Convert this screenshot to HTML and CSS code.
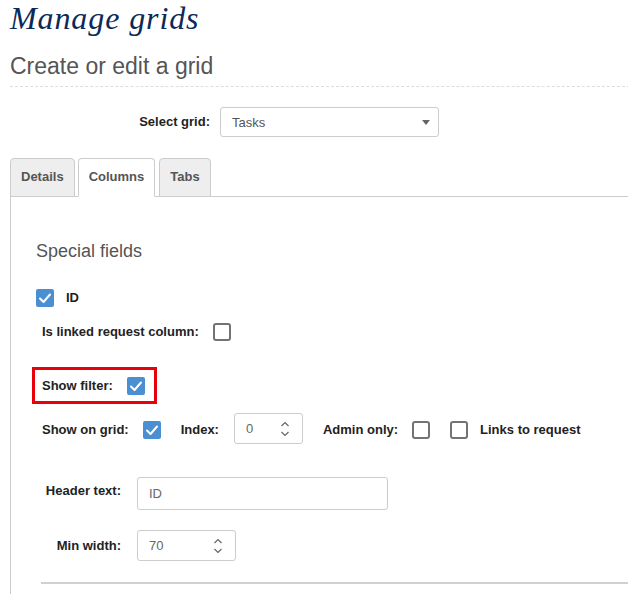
FILE: index.html
```html
<!DOCTYPE html>
<html>
<head>
<meta charset="utf-8">
<title>Manage grids</title>
<link rel="stylesheet" href="styles.css">
</head>
<body>
<div class="page">
  <h1 class="title">Manage grids</h1>
  <h2 class="subtitle">Create or edit a grid</h2>

  <div class="select-row">
    <span class="select-label">Select grid:</span>
    <div class="select"><span class="select-value">Tasks</span><span class="caret"></span></div>
  </div>

  <div class="tabs">
    <div class="tab">Details</div>
    <div class="tab active">Columns</div>
    <div class="tab">Tabs</div>
  </div>

  <div class="panel">
    <h3 class="section-title">Special fields</h3>

    <div class="row">
      <span class="cb checked"><svg viewBox="0 0 18 18" width="18" height="18"><polyline points="4,9.5 7.5,13 14,5.5" fill="none" stroke="#fff" stroke-width="2" stroke-linecap="round" stroke-linejoin="round"/></svg></span>
      <span class="lbl cb-text">ID</span>
    </div>

    <div class="row row-indent row-linked">
      <span class="lbl gap">Is linked request column:</span>
      <span class="cb"></span>
    </div>

    <div class="highlight">
      <span class="lbl gap">Show filter:</span>
      <span class="cb checked"><svg viewBox="0 0 18 18" width="18" height="18"><polyline points="4,9.5 7.5,13 14,5.5" fill="none" stroke="#fff" stroke-width="2" stroke-linecap="round" stroke-linejoin="round"/></svg></span>
    </div>

    <div class="row row-indent row-grid">
      <span class="lbl gap mid">Show on grid:</span>
      <span class="cb checked mid"><svg viewBox="0 0 18 18" width="18" height="18"><polyline points="4,9.5 7.5,13 14,5.5" fill="none" stroke="#fff" stroke-width="2" stroke-linecap="round" stroke-linejoin="round"/></svg></span>
      <span class="lbl mid lead index-label">Index:</span>
      <div class="input input-index">
        <span>0</span>
        <svg class="spin" viewBox="0 0 10 16" width="10" height="16"><polyline points="1.5,5 5,1.5 8.5,5" fill="none" stroke="#666" stroke-width="1.2"/><polyline points="1.5,11 5,14.5 8.5,11" fill="none" stroke="#666" stroke-width="1.2"/></svg>
      </div>
      <span class="lbl gap mid lead">Admin only:</span>
      <span class="cb mid"></span>
      <span class="cb mid lead"></span>
      <span class="lbl mid cb-text">Links to request</span>
    </div>

    <div class="field-row field-header">
      <span class="field-label">Header text:</span>
      <div class="input input-wide"><span>ID</span></div>
    </div>

    <div class="field-row field-min">
      <span class="field-label">Min width:</span>
      <div class="input input-min">
        <span>70</span>
        <svg class="spin" viewBox="0 0 10 16" width="10" height="16"><polyline points="1.5,5 5,1.5 8.5,5" fill="none" stroke="#666" stroke-width="1.2"/><polyline points="1.5,11 5,14.5 8.5,11" fill="none" stroke="#666" stroke-width="1.2"/></svg>
      </div>
    </div>

    <div class="divider"></div>
  </div>
</div>
</body>
</html>
```

FILE: styles.css
```css
html, body {
  margin: 0;
  padding: 0;
  background: #fff;
  overflow: hidden;
}

body {
  font-family: "Liberation Sans", Arial, sans-serif;
  font-size: 13px;
  color: #222;
}

.page {
  padding-left: 10px;
  width: 640px;
}

.title {
  margin: 0;
  font-family: "Liberation Serif", "Times New Roman", serif;
  font-style: italic;
  font-weight: normal;
  font-size: 32px;
  line-height: 36px;
  letter-spacing: 0.9px;
  color: #0c2a58;
}

.subtitle {
  margin: 16px 0 0;
  padding-bottom: 6px;
  font-weight: normal;
  font-size: 23px;
  line-height: 28px;
  color: #555;
  border-bottom: 1px dashed #ddd;
}

.select-row {
  display: flex;
  align-items: center;
  margin-top: 20px;
}

.select-label {
  width: 200px;
  margin-right: 10px;
  text-align: right;
  font-weight: bold;
  line-height: 18px;
}

.select {
  box-sizing: border-box;
  width: 219px;
  height: 30px;
  border: 1px solid #ccc;
  border-radius: 3px;
  display: flex;
  align-items: center;
  justify-content: space-between;
  padding: 0 8px 0 11px;
  color: #555;
}

.caret {
  width: 0;
  height: 0;
  border-left: 4.5px solid transparent;
  border-right: 4.5px solid transparent;
  border-top: 5px solid #666;
  margin-top: 1px;
}

.tabs {
  display: flex;
  margin-top: 21px;
  border-bottom: 1px solid #ccc;
}

.tab {
  margin-right: 3px;
  margin-bottom: -1px;
  padding: 8px 10px 9px;
  line-height: 20px;
  border: 1px solid #ccc;
  border-radius: 4px 4px 0 0;
  background: #eee;
  color: #555;
  font-weight: bold;
}

.tab.active {
  background: #fff;
  border-bottom-color: #fff;
  margin-right: 4px;
}

.panel {
  border-left: 1px solid #ccc;
  padding: 43px 0 40px 25px;
}

.section-title {
  margin: 0;
  font-weight: normal;
  font-size: 18px;
  line-height: 22px;
  color: #555;
}

.row {
  display: flex;
  align-items: center;
  margin-top: 27px;
  line-height: 18px;
}

.row-indent {
  padding-left: 6px;
}

.row-linked {
  margin-top: 16px;
}

.lbl {
  font-weight: bold;
  line-height: 18px;
  white-space: nowrap;
}

.gap {
  margin-right: 14px;
}

.lead {
  margin-left: 20px;
}

.cb-text {
  margin-left: 12px;
}

.cb {
  box-sizing: border-box;
  width: 18px;
  height: 18px;
  flex: none;
  border: 2px solid #737373;
  border-radius: 3px;
  background: #fff;
}

.cb.checked {
  border: none;
  border-radius: 2px;
  background: #4a8fd2;
}

.cb svg {
  display: block;
}

.highlight {
  display: inline-flex;
  align-items: center;
  margin: 26px 0 0 -4px;
  padding: 7px 9px 6px 7px;
  border: 3px solid #e8000b;
}

.row-grid {
  align-items: flex-start;
  margin-top: 9px;
}

.mid {
  margin-top: 8px;
}

.index-label {
  margin-right: 15px;
}

.input {
  box-sizing: border-box;
  border: 1px solid #ccc;
  border-radius: 3px;
  display: flex;
  align-items: center;
  justify-content: space-between;
  padding: 0 12px 0 11px;
  color: #666;
  font-size: 13px;
}

.input-index {
  width: 69px;
  height: 31px;
}

.input-wide {
  width: 251px;
  height: 33px;
}

.input-min {
  width: 99px;
  height: 31px;
}

.spin {
  display: block;
  flex: none;
}

.field-row {
  display: flex;
  align-items: flex-start;
}

.field-header {
  margin-top: 33px;
}

.field-min {
  margin-top: 20px;
}

.field-label {
  width: 85px;
  margin-right: 16px;
  text-align: right;
  font-weight: bold;
  line-height: 18px;
  white-space: nowrap;
}

.field-header .field-label {
  margin-top: 5px;
}

.field-min .field-label {
  margin-top: 7px;
}

.divider {
  margin: 21px 0 0 5px;
  height: 2px;
  background: #d0d0d0;
}
```
